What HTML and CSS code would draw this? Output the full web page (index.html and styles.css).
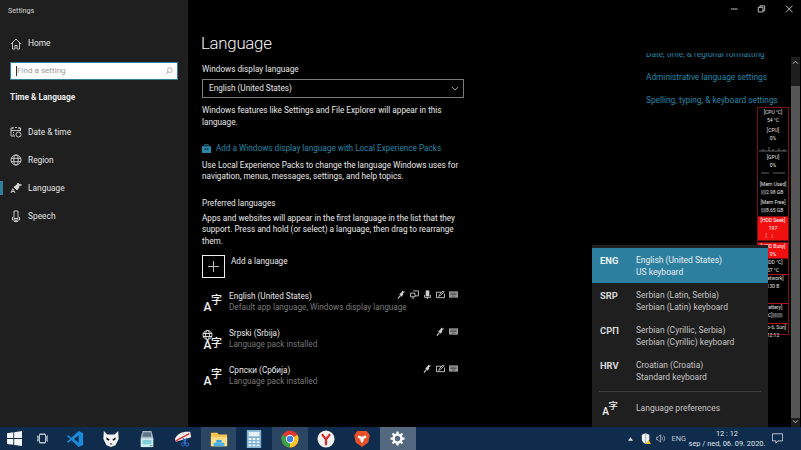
FILE: index.html
```html
<!DOCTYPE html>
<html lang="en">
<head>
<meta charset="utf-8">
<title>Settings</title>
<link rel="stylesheet" href="styles.css">
</head>
<body>
<svg class="defs" width="0" height="0" aria-hidden="true">
  <symbol id="f-speech" viewBox="0 0 10 10"><path d="M1 9.500l2.500-3" fill="none" stroke="currentColor" stroke-width="1.200"/><path d="M2.500 5l2.500 2.500 2-2.500-.5-1.500L9.500 2 7 1.800 6 .5 5 2.500z" fill="currentColor"/></symbol>
  <symbol id="f-display" viewBox="0 0 10 10"><path d="M3.500 1h6v5.500h-4M.5 3.500h5v4h-5zM2 9h2.500" fill="none" stroke="currentColor"/></symbol>
  <symbol id="f-mic" viewBox="0 0 10 10"><path d="M3 .5h4v6.500H3z" fill="currentColor"/><path d="M1.800 5.500V8.200h6.400V5.500M5 8v2" fill="none" stroke="currentColor"/></symbol>
  <symbol id="f-hand" viewBox="0 0 10 10"><path d="M.5 2.500h6M.5 2.500v6h9V4M3 7l1-2 4-4 1 1-4 4z" fill="none" stroke="currentColor"/></symbol>
  <symbol id="f-key" viewBox="0 0 10 10"><path d="M0 1.500h10v7H0z" fill="#9a9a9a"/><path d="M1.500 3.500h7M1.500 5h7M3 6.800h4" stroke="#333" stroke-width=".7"/></symbol>
</svg>

<div class="window">
  <aside class="sidebar">
    <div class="app-title">Settings</div>
    <a class="nav home"><svg class="nav-ic" viewBox="0 0 12 12"><path d="M1 6l5-5 5 5M2.500 5v6H5V7.500h2V11h2.500V5" /></svg>Home</a>
    <div class="search"><span class="caret"></span><span class="search-text">Find a setting</span><svg class="search-ic" viewBox="0 0 10 10"><circle cx="6" cy="4" r="3"/><path d="M4 6L1 9"/></svg></div>
    <div class="section">Time &amp; Language</div>
    <nav class="nav-list">
      <a class="nav"><svg class="nav-ic" viewBox="0 0 12 12"><path d="M3 2H1v8h4M9 2h1.500v3M3 1v2M9 1v2M5 1.500h2M1 4.500h9.500"/><circle cx="8.500" cy="8.500" r="2.500"/><path d="M3 6.500h1M3 8.500h1"/></svg>Date &amp; time</a>
      <a class="nav"><svg class="nav-ic" viewBox="0 0 12 12"><circle cx="6" cy="6" r="5"/><ellipse cx="6" cy="6" rx="2.200" ry="5"/><path d="M1 4.300h10M1 7.700h10"/></svg>Region</a>
      <a class="nav active"><svg class="nav-ic" viewBox="0 0 12 12"><path d="M1 11l1.800-4.500L5 11M1.800 9.500h2.500" /><path d="M4 5l3 3 2-3-.5-1.500L11.500 3 9 2.500 8 1 7 3z" fill="#d8d8d8"/></svg>Language</a>
      <a class="nav"><svg class="nav-ic" viewBox="0 0 12 12"><path d="M4 1h4v7.500H4zM2.500 7v3h7V7M6 10v1.500M4 11.500h4"/></svg>Speech</a>
    </nav>
  </aside>

  <main class="main">
    <section class="content">
      <h1>Language</h1>
      <div class="label">Windows display language</div>
      <div class="select"><span>English (United States)</span><svg class="chev" viewBox="0 0 10 6"><path d="M1 1l4 4 4-4"/></svg></div>
      <p class="para">Windows features like Settings and File Explorer will appear in this language.</p>
      <div class="link-row"><svg class="bag" viewBox="0 0 10 10"><path d="M0 2.500h10V10H0z" fill="#2b88a8"/><path d="M3 2.500V.8h4v1.700" fill="none" stroke="#2b88a8"/><path d="M3 5h1.500v1.500H3zM5.500 5H7v1.500H5.500z" fill="#000"/></svg><a class="link">Add a Windows display language with Local Experience Packs</a></div>
      <p class="para tight">Use Local Experience Packs to change the language Windows uses for navigation, menus, messages, settings, and help topics.</p>
      <div class="label pref">Preferred languages</div>
      <p class="para apps">Apps and websites will appear in the first language in the list that they support. Press and hold (or select) a language, then drag to rearrange them.</p>
      <div class="add"><span class="plus"><svg viewBox="0 0 11 11"><path d="M5.500 0v11M0 5.500h11"/></svg></span><span class="add-text">Add a language</span></div>

      <div class="lang">
        <svg class="lang-ic" viewBox="0 0 20 20"><text x="1.500" y="18" class="g-a">A<tspan class="g-z" dx="-.5" dy="-7">字</tspan></text></svg>
        <div class="lang-body"><div class="lang-name">English (United States)</div><div class="lang-sub">Default app language, Windows display language</div></div>
        <div class="feat"><svg><use href="#f-speech"/></svg><svg><use href="#f-display"/></svg><svg><use href="#f-mic"/></svg><svg><use href="#f-hand"/></svg><svg><use href="#f-key"/></svg></div>
      </div>
      <div class="lang">
        <svg class="lang-ic" viewBox="0 0 20 20"><g fill="none" stroke="#eee" stroke-width=".9"><circle cx="5.500" cy="5" r="4.500"/><ellipse cx="5.500" cy="5" rx="2" ry="4.500"/><path d="M1 3.500h9M1 6.500h9"/></g><text x="1.500" y="19" class="g-a">A<tspan class="g-z" dx="-.5" dy="-2">字</tspan></text></svg>
        <div class="lang-body"><div class="lang-name">Srpski (Srbija)</div><div class="lang-sub">Language pack installed</div></div>
        <div class="feat"><svg><use href="#f-speech"/></svg><svg><use href="#f-key"/></svg></div>
      </div>
      <div class="lang">
        <svg class="lang-ic" viewBox="0 0 20 20"><text x="1.500" y="18" class="g-a">A<tspan class="g-z" dx="-.5" dy="-7">字</tspan></text></svg>
        <div class="lang-body"><div class="lang-name">Српски (Србија)</div><div class="lang-sub">Language pack installed</div></div>
        <div class="feat"><svg><use href="#f-speech"/></svg><svg><use href="#f-hand"/></svg><svg><use href="#f-key"/></svg></div>
      </div>
    </section>

    <section class="related">
      <a class="link clipped">Date, time, &amp; regional formatting</a>
      <a class="link">Administrative language settings</a>
      <a class="link">Spelling, typing, &amp; keyboard settings</a>
    </section>

    <div class="scrollbar">
      <svg class="sb-arrow" viewBox="0 0 8 5"><path d="M1 4l3-3 3 3"/></svg>
      <div class="thumb"></div>
      <svg class="sb-arrow" viewBox="0 0 8 5"><path d="M1 1l3 3 3-3"/></svg>
    </div>
  </main>
</div>

<div class="controls">
  <svg viewBox="0 0 10 10"><path d="M1 5h8"/></svg>
  <svg viewBox="0 0 10 10"><path d="M1.500 3h5.500v5.500H1.500zM3.500 3V1.300h5.500V7H7"/></svg>
  <svg viewBox="0 0 10 10"><path d="M1 1l8 8M9 1l-8 8"/></svg>
</div>

<aside class="gadget">
  <div class="g-block cpu"><b>[CPU °C]</b><b>54 °C</b></div>
  <div class="g-block gap"><b>[CPU]</b><b>0%</b></div>
  <svg class="g-graph" viewBox="0 0 30 8"><path d="M1 7h28M5 7V5M11 7V3M15 7V5M21 7V4M26 7V5"/></svg>
  <div class="g-block gap2"><b>[GPU]</b><b>0%</b></div>
  <svg class="g-graph low" viewBox="0 0 30 4"><path d="M3 3h8M15 3h12"/></svg>
  <div class="g-block mem"><b>[Mem Used]</b><b class="left">||||2.98 GB</b></div>
  <div class="g-block mem2"><b>[Mem Free]</b><b class="left">||||8.65 GB</b></div>
  <div class="g-red seek"><b>[HDD Seek]</b><b>197</b><svg viewBox="0 0 30 8"><path d="M6 8V1M14 8V3"/></svg></div>
  <div class="g-red busy"><b>[HDD Busy]</b><b>9%</b></div>
  <div class="g-cell hdd"><b>[HDD °C]</b><b>37 °C</b></div>
  <div class="g-cell net"><b>[Network]</b><b>130 B</b></div>
  <div class="g-cell bat"><b>[Battery]</b><b>[AC]||||||||</b></div>
  <div class="g-cell day"><b>[Sep-6, Sun]</b><b>12:12</b></div>
</aside>

<aside class="flyout">
  <div class="kb on"><b>ENG</b><div>English (United States)<br>US keyboard</div></div>
  <div class="kb"><b>SRP</b><div>Serbian (Latin, Serbia)<br>Serbian (Latin) keyboard</div></div>
  <div class="kb"><b>СРП</b><div>Serbian (Cyrillic, Serbia)<br>Serbian (Cyrillic) keyboard</div></div>
  <div class="kb"><b>HRV</b><div>Croatian (Croatia)<br>Standard keyboard</div></div>
  <div class="fly-rule"></div>
  <div class="prefs"><svg class="prefs-ic" viewBox="0 0 20 20"><text x="1.500" y="18" class="g-a">A<tspan class="g-z" dx="-.5" dy="-7">字</tspan></text></svg><span>Language preferences</span></div>
</aside>

<footer class="taskbar">
  <div class="tb-left">
    <span class="tb start"><svg viewBox="0 0 15 15"><path d="M0 2.200l6.300-.9v5.800H0zM7.200 1.200L15 0v7.100H7.200zM0 8h6.300v5.800L0 12.900zM7.200 8H15v7l-7.800-1.100z" fill="#f4f7fa"/></svg></span>
    <span class="tb tv"><svg viewBox="0 0 11 11"><path d="M2.500 1.500h6v8h-6zM0 3h1.200v5H0zM9.800 3H11v5H9.800z" fill="none" stroke="#b9c4cf"/><path d="M2.500 1h6M2.500 10h6" stroke="#b9c4cf"/></svg></span>
    <span class="tb"><svg viewBox="0 0 20 20"><path d="M14 1l5 2.300v13.400L14 19 6 11.500l-3.500 2.700L1 13l3.800-3L1 7l1.500-1.200L6 8.500z" fill="#1b8ad6"/><path d="M14 6v8L9 10z" fill="#0f2b4c"/></svg></span>
    <span class="tb"><svg viewBox="0 0 20 20"><path d="M2 1l4 4h8l4-4 .5 9L15 17l-5 2-5-2-3.500-7z" fill="#f2f2f2"/><path d="M5 8l3.500 2.500-1 1.500L5 10.500zM15 8l-3.500 2.500 1 1.500 2.500-1.500z" fill="#111"/><path d="M8.500 15h3l-1.500 1.800z" fill="#111"/></svg></span>
    <span class="tb"><svg viewBox="0 0 20 20"><path d="M5 1h10l2 8H3z" fill="#a9b9c4"/><path d="M6 2.500h8l1 5H5z" fill="#5b7688"/><path d="M3 9h14v10H3z" fill="#d7ecf1"/><path d="M5 11h10v5H5z" fill="#7fd0d9"/><path d="M13 17h3v1h-3z" fill="#3a9c4d"/></svg></span>
    <span class="tb"><svg viewBox="0 0 20 20"><path d="M1 10C3 4 10 1 18 2l1 6-17 5z" fill="#eee"/><path d="M2 12L17 4" stroke="#d33" stroke-width="1.600"/><path d="M10 9l3 6M14 9l-3 6" stroke="#2f6fd0" stroke-width="1.400"/><circle cx="10" cy="16" r="1.800" fill="none" stroke="#2f6fd0"/><circle cx="14.500" cy="16" r="1.800" fill="none" stroke="#2f6fd0"/></svg></span>
    <span class="tb open"><svg viewBox="0 0 20 20"><path d="M1 3h7l2 2h9v13H1z" fill="#f5c64e"/><path d="M1 8h18v10H1z" fill="#fbe08a"/><path d="M7 11h6v3H7z" fill="#3aa2e0"/><path d="M4 14h12v4H4z" fill="#4bb2ea"/></svg></span>
    <span class="tb"><svg viewBox="0 0 16 20"><path d="M0 0h16v20H0z" fill="#7fb3d6"/><path d="M2 2h12v5H2z" fill="#e8f1f6"/><path d="M2 9h3v2H2zM6.500 9h3v2h-3zM11 9h3v2h-3zM2 12.500h3v2H2zM6.500 12.500h3v2h-3zM11 12.500h3v2h-3zM2 16h3v2H2zM6.500 16h3v2h-3zM11 16h3v2h-3z" fill="#f4f8fb"/></svg></span>
    <span class="tb open"><svg viewBox="0 0 20 20"><circle cx="10" cy="10" r="9.500" fill="#e0382e"/><path d="M10 10L18.200 5.250A9.500 9.500 0 0 1 10 19.500z" fill="#f7c52b"/><path d="M10 10V19.500A9.500 9.500 0 0 1 1.800 5.250z" fill="#37a34a"/><circle cx="10" cy="10" r="4.600" fill="#fff"/><circle cx="10" cy="10" r="3.500" fill="#3f7fe6"/></svg></span>
    <span class="tb"><svg viewBox="0 0 20 20"><circle cx="10" cy="10" r="9.500" fill="#f2f2f2"/><path d="M5.500 4.500L10 10.500 14.500 4.500M10 10.500V17" fill="none" stroke="#e0262c" stroke-width="2.400"/></svg></span>
    <span class="tb"><svg viewBox="0 0 18 20"><path d="M4 1h10l2.500 3 1 2-1.500 8-7 5-7-5L.5 6l1-2z" fill="#e8502a"/><path d="M5 6l4 1.500L13 6l1 2-3 2-1 4H8l-1-4-3-2z" fill="#fff"/></svg></span>
    <span class="tb current"><svg viewBox="0 0 16 16"><circle cx="8" cy="8" r="4.200" fill="none" stroke="#fff" stroke-width="2.600"/><path d="M8 .5v3M8 12.500v3M.5 8h3M12.500 8h3M2.700 2.700l2 2M11.300 11.300l2 2M13.300 2.700l-2 2M4.700 11.300l-2 2" stroke="#fff" stroke-width="2.400"/></svg></span>
  </div>
  <div class="tray">
    <svg class="tray-up" viewBox="0 0 6 4"><path d="M0 4l3-4 3 4z" fill="#dfe5ea"/></svg>
    <span class="shield"><svg viewBox="0 0 12 14"><path d="M1 2l4.500-2L10 2v5c0 3-2 5-4.500 6C3 12 1 10 1 7z" fill="#eef1f3"/><path d="M5.500 0v13" stroke="#8b98a3" stroke-width=".8"/><path d="M6.500 13l2.700-5 2.800 5z" fill="#f2c21a"/></svg></span>
    <svg class="vol" viewBox="0 0 12 10"><path d="M.5 3.500h2l3-3v9l-3-3h-2z" fill="none" stroke="#a9b5bf"/><path d="M7 3c1 1 1 3 0 4M9 1.500c1.800 2 1.800 5 0 7" fill="none" stroke="#a9b5bf"/></svg>
    <span class="ime">ENG</span>
    <div class="clock"><span>12 : 12</span><span>sep / ned, 06. 09. 2020.</span></div>
    <svg class="notif" viewBox="0 0 14 13"><path d="M.5.500h13v9H7.500L5 12.500v-3H.5z" fill="none" stroke="#e6ebef"/></svg>
  </div>
</footer>
</body>
</html>
```
FILE: styles.css
```css
* { box-sizing: border-box; }
html, body { margin: 0; padding: 0; }
body {
  width: 801px; height: 450px; overflow: hidden; position: relative;
  display: flex; flex-direction: column;
  background: #000; color: #e8e8e8;
  font-family: Roboto, "Noto Sans", "Noto Sans CJK SC", sans-serif;
  font-size: 8.200px; line-height: 11.300px;
}
.defs { position: absolute; }
.g-a { fill: #f2f2f2; font: 500 12px Roboto, sans-serif; }
.g-z { fill: #f2f2f2; font: 500 11px "Noto Sans CJK SC", sans-serif; }

.window { flex: 0 0 427px; display: flex; min-height: 0; }
.sidebar { flex: 0 0 188px; background: #1f1f1f; display: flex; flex-direction: column; }
.app-title { padding: 5px 0 0 8px; height: 37px; font-size: 7.200px; color: #d6d6d6; }
.nav { display: flex; align-items: center; height: 28px; padding-left: 10px; gap: 6px; color: #e2e2e2; font-size: 8.400px; position: relative; }
.nav-ic { width: 12px; height: 12px; fill: none; stroke: #d8d8d8; stroke-width: .9; flex: none; }
.home { height: 14px; }
.search { margin: 11px 10px 0 10px; height: 18px; background: #fff; border: 1.500px solid #2f7f9d; display: flex; align-items: center; padding: 0 4px 0 5px; color: #9a9a9a; font-size: 8.100px; }
.caret { width: 1px; height: 10px; background: #333; }
.search-text { flex: 1; }
.search-ic { width: 8px; height: 8px; fill: none; stroke: #999; stroke-width: .9; }
.section { margin-top: 12px; padding-left: 10px; font-weight: 700; font-size: 8.300px; color: #ececec; }
.nav-list { margin-top: 15px; display: flex; flex-direction: column; }
.active::before { content: ""; position: absolute; left: 0; top: 7px; width: 2.500px; height: 14px; background: #2f7f9d; }

.main { flex: 1; display: flex; background: #000; min-width: 0; }
.content { flex: 0 0 276px; margin-left: 13px; padding-top: 32px; }
h1 { margin: 0; font-size: 16.800px; letter-spacing: -.25px; line-height: 23px; font-weight: 300; color: #f4f4f4; }
.label, .select, .para, .link-row, .add, .lang { margin-left: 1px; }
.label { margin-top: 9px; color: #e6e6e6; }
.select { margin-top: 4px; width: 262px; height: 19px; border: 1px solid #7a7a7a; display: flex; align-items: center; justify-content: space-between; padding: 0 4px 0 6px; color: #e6e6e6; }
.chev { width: 8px; height: 5px; fill: none; stroke: #cfcfcf; }
.para { margin-top: 7px; margin-bottom: 0; margin-right: 0; width: 262px; color: #e8e8e8; }
.tight { margin-top: 6px; }
.apps { margin-top: 4px; }
.link-row { display: flex; align-items: center; gap: 5px; margin-top: 15px; }
.bag { width: 9px; height: 9px; flex: none; }
.link { color: #2587a8; display: block; }
.pref { margin-top: 15px; }
.add { display: flex; gap: 6px; margin-top: 8px; }
.plus { width: 23px; height: 23px; border: 1px solid #f0f0f0; display: flex; align-items: center; justify-content: center; }
.plus svg { width: 11px; height: 11px; stroke: #e6e6e6; fill: none; stroke-width: .8; }
.add-text { margin-top: 1px; color: #e8e8e8; }
.lang { display: flex; position: relative; width: 262px; height: 37px; align-items: flex-start; }
.add + .lang { margin-top: 13px; }
.lang-ic { width: 20px; height: 20px; flex: none; margin: 2px 7px 0 0; overflow: visible; }
.lang-body { flex: 1; white-space: nowrap; color: #e6e6e6; }
.lang-sub { color: #787878; }
.feat { position: absolute; top: -1px; right: 6px; display: flex; gap: 4px; }
.feat svg { width: 9px; height: 9px; color: #cfcfcf; }

.related { flex: 0 0 146px; margin-left: 169px; margin-right: -1px; padding-top: 53px; overflow: hidden; display: flex; flex-direction: column; }
.related .link { font-size: 8.300px; white-space: nowrap; line-height: 11.300px; margin-top: 11.700px; }
.related .clipped { margin-top: 0; margin-bottom: 1.600px; height: 6px; line-height: 3px; overflow: hidden; flex: none; }

.scrollbar { flex: 0 0 9px; margin-top: 57px; background: #1e1e1e; display: flex; flex-direction: column; align-items: center; justify-content: space-between; padding-top: 2px; }
.sb-arrow { width: 7px; height: 5px; fill: none; stroke: #bdbdbd; flex: none; margin: 1px 0 3px; }
.thumb { align-self: stretch; flex: 1; margin-top: 18px; background: #565656; }

.controls { position: absolute; top: 4px; right: 8px; display: flex; gap: 19px; }
.controls svg { width: 8.500px; height: 10px; fill: none; stroke: #dcdcdc; stroke-width: 1; }

.gadget { position: absolute; left: 757px; top: 107px; width: 32px; height: 228px; border: 1px solid #7a0f14; background: #000; font-size: 5px; line-height: 7.500px; color: #e0e0e0; text-align: center; }
.gadget b { display: block; font-weight: 400; white-space: nowrap; overflow: hidden; }
.gadget .left { text-align: left; padding-left: 3px; }
.g-block { padding-top: 1px; }
.gap { margin-top: 2px; }
.gap2 { margin-top: 1px; }
.g-graph { display: block; width: 30px; height: 8px; margin-top: 2px; fill: none; stroke: #aaa; stroke-width: .6; }
.g-graph.low { height: 4px; margin-top: 1px; }
.mem { margin-top: 6px; }
.mem2 { margin-top: 2px; }
.g-red { background: #f01010; color: #fff; border-top: 1px solid #7a0f14; border-bottom: 1px solid #7a0f14; overflow: hidden; }
.seek { margin-top: 2px; height: 25px; }
.seek svg { display: block; width: 30px; height: 6px; stroke: #ffd0d0; stroke-width: .6; }
.busy { margin-top: 1px; height: 17px; }
.g-cell { border-bottom: 1.500px solid #b01218; }
.hdd { height: 16px; }
.net { height: 29px; }
.bat { height: 20px; }
.day { height: 17px; border-bottom: 0; }

.flyout { position: absolute; left: 592px; top: 245px; width: 176px; height: 182px; background: #1f1f1f; color: #c4c4c4; font-size: 8.500px; line-height: 11.800px; padding-top: 3px; }
.kb { display: flex; height: 35px; padding: 7px 0 0 8px; }
.kb b { flex: 0 0 36px; font-weight: 700; color: #d6d6d6; font-size: 9.400px; }
.kb.on { background: #2d7f9f; color: #e6eef2; }
.kb.on b { color: #eef5f8; }
.fly-rule { height: 1px; background: #3d3d3d; margin: 3px 7px 0 7px; }
.prefs { display: flex; align-items: center; margin-top: 8px; padding-left: 9px; gap: 18px; }
.prefs-ic { width: 17px; height: 17px; overflow: visible; }

.taskbar { flex: 1; background: #0f2c4c; display: flex; justify-content: space-between; align-items: stretch; }
.tb-left { display: flex; }
.tb { width: 35.900px; display: flex; align-items: center; justify-content: center; }
.tb svg { width: 18px; height: 18px; }
.tb:nth-child(1) { width: 28px; }
.tb:nth-child(2) { width: 29px; }
.start svg { width: 15px; height: 15px; }
.tv svg { width: 11px; height: 11px; }
.open { background: #2b4663; }
.current { background: #54687f; }
.current svg { width: 15px; height: 15px; }
.tray { display: flex; align-items: center; color: #dfe5ea; font-size: 7.400px; padding-right: 18px; white-space: nowrap; }
.tray-up { width: 5px; height: 4px; margin-right: 8px; }
.shield { width: 10px; height: 12px; margin-right: 5px; }
.shield svg { width: 10px; height: 12px; display: block; }
.vol { width: 10px; height: 9px; margin-right: 5px; }
.ime { margin-right: 5px; color: #b8c4ce; }
.clock { display: flex; flex-direction: column; align-items: center; line-height: 10px; width: 72px; margin-right: 9px; }
.notif { width: 11px; height: 11px; }
```
